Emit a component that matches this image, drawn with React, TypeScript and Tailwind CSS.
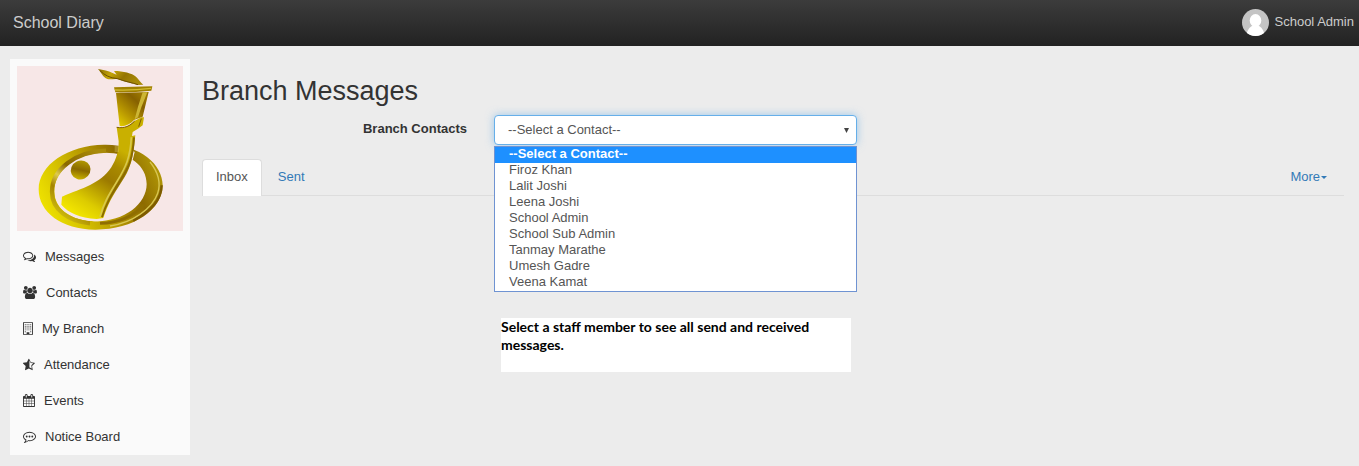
import React from "react";

type IconProps = { path: string; viewBox: string; size: string };

function Glyph({ path, viewBox, size }: IconProps) {
  return (
    <svg viewBox={viewBox} className={size + " mb-0.5 shrink-0 fill-current"} aria-hidden="true">
      <path fillRule="evenodd" d={path} />
    </svg>
  );
}

const messages =
  "M704 384q-153 0-286 52t-211.5 141-78.5 191q0 82 53 158t149 132l97 56-35 84q34-20 62-39l44-31 53 10q78 14 153 14 153 0 286-52t211.5-141 78.5-191-78.5-191-211.5-141-286-52zm0-128q191 0 353.5 68.5t256.5 186.5 94 257-94 257-256.5 186.5-353.5 68.5q-86 0-176-16-124 88-278 128-36 9-86 16h-3q-11 0-20.5-8t-11.5-21q-1-3-1-6.5t.5-6.5 2-6l2.5-5 3.5-5.5 4-5 4.5-5 4-4.5q5-6 23-25t26-29.5 22.5-29 25-38.5 20.5-44q-124-72-195-177t-71-224q0-139 94-257t256.5-186.5 353.5-68.5zm822 1169q10 24 20.5 44t25 38.5 22.5 29 26 29.5 23 25q1 1 4 4.5t4.5 5 4 5 3.5 5.5l2.5 5 2 6 .5 6.5-1 6.5q-3 14-13 22t-22 7q-50-7-86-16-154-40-278-128-90 16-176 16-271 0-472-132 58 4 88 4 161 0 309-45t264-129q125-92 192-212t67-254q0-77-23-152 129 71 204 178t75 230q0 120-71 224.5t-195 176.5z";
const contacts =
  "M657 896q-162 5-265 128h-134q-82 0-138-40.5t-56-118.5q0-353 124-353 6 0 43.5 21t97.5 42.5 119 21.5q67 0 133-23-5 37-5 66 0 139 81 256zm1071 637q0 120-73 189.5t-194 69.5h-874q-121 0-194-69.500t-73-189.500q0-53 3.500-103.500t14-109 26.500-108.500 43-97.500 62-81 85.500-53.500 111.500-20q10 0 43 21.500t73 48 107 48 135 21.500 135-21.500 107-48 73-48 43-21.500q61 0 111.500 20t85.500 53.500 62 81 43 97.500 26.500 108.500 14 109 3.500 103.500zm-1024-1277q0 106-75 181t-181 75-181-75-75-181 75-181 181-75 181 75 75 181zm704 384q0 159-112.500 271.500t-271.500 112.500-271.500-112.500-112.500-271.500 112.500-271.500 271.500-112.500 271.500 112.500 112.500 271.500zm576 225q0 78-56 118.500t-138 40.500h-134q-103-123-265-128 81-117 81-256 0-29-5-66 66 23 133 23 59 0 119-21.500t97.500-42.500 43.500-21q124 0 124 353zm-128-609q0 106-75 181t-181 75-181-75-75-181 75-181 181-75 181 75 75 181z";
const cells = [256, 512, 768, 1024]
  .flatMap((y) => [256, 512, 768, 1024].map((x) => `M${x} ${y}h128v128h-128z`))
  .join("");
const branch =
  "M64 0h1280q64 0 64 64v1664q0 64-64 64H64q-64 0-64-64V64Q0 0 64 0zM128 128v1536h384v-224q0-32 32-32h320q32 0 32 32v224h384V128z" +
  cells +
  "M256 1280h128v128h-128zM1024 1280h128v128h-128z";
const attendance =
  "M1250 957l238-231-329-48-40-6-18-37-147-297v942l35 18 293 155-56-328-7-40zm433-199l-363 354 86 500q5 33-6 51.500t-34 18.500q-17 0-40-12l-449-236-449 236q-23 12-40 12-23 0-34-18.500t-6-51.500l86-500-364-354q-32-32-23-59.500t54-34.500l502-73 225-455q20-41 49-41 28 0 49 41l225 455 502 73q45 7 54 34.500t-24 59.500z";
const events =
  "M192 1664h288v-288h-288v288zm352 0h320v-288h-320v288zm-352-352h288v-320h-288v320zm352 0h320v-320h-320v320zm-352-384h288v-288h-288v288zm736 736h320v-288h-320v288zm-384-736h320v-288h-320v288zm768 736h288v-288h-288v288zm-384-352h320v-320h-320v320zm-352-864v-288q0-13-9.500-22.500t-22.500-9.500h-64q-13 0-22.500 9.500t-9.500 22.500v288q0 13 9.500 22.500t22.500 9.500h64q13 0 22.500-9.500t9.500-22.500zm736 864h288v-320h-288v320zm-384-384h320v-288h-320v288zm384 0h288v-288h-288v288zm32-480v-288q0-13-9.500-22.500t-22.500-9.500h-64q-13 0-22.500 9.500t-9.500 22.500v288q0 13 9.500 22.500t22.500 9.500h64q13 0 22.500-9.500t9.500-22.500zm384-64v1280q0 52-38 90t-90 38h-1408q-52 0-90-38t-38-90v-1280q0-52 38-90t90-38h128v-96q0-66 47-113t113-47h64q66 0 113 47t47 113v96h384v-96q0-66 47-113t113-47h64q66 0 113 47t47 113v96h128q52 0 90 38t38 90z";
const dot = "q0 53-37.5 90.5t-90.5 37.5-90.5-37.5-37.5-90.5 37.5-90.5 90.5-37.5 90.5 37.5 37.5 90.5z";
const notice =
  "M640 896" + dot + "M1024 896" + dot + "M1408 896" + dot +
  "M896 384q-204 0-381.5 69.5t-282 187.5-104.500 255q0 112 71.500 213.500t201.500 175.500l87 50-27 96q-24 91-70 172 152-63 275-171l43-38 57 6q69 8 130 8 204 0 381.500-69.500t282-187.500 104.500-255-104.500-255-282-187.500-381.500-69.500zm896 512q0 174-120 321.500t-326 233-450 85.500q-70 0-145-8-198 175-460 242-49 14-114 22h-5q-15 0-27-10.500t-16-27.500v-1q-3-4-.5-12t2-10 4.500-9.500l6-9 7-8.500 8-9q7-8 31-34.500t34.500-38 31-39.500 32.500-51 27-59 26-76q-157-89-247.500-220t-90.500-281q0-130 71-248.500t191-204.500 286-136.500 348-50.500 348 50.500 286 136.500 191 204.500 71 248.500z";

const menu = [
  { label: "Messages", path: messages, viewBox: "0 0 1792 1792", size: "h-[13px] w-[13px]" },
  { label: "Contacts", path: contacts, viewBox: "64 0 1920 1792", size: "h-[13px] w-[14px]" },
  { label: "My Branch", path: branch, viewBox: "0 0 1408 1792", size: "h-[13px] w-[10px]" },
  { label: "Attendance", path: attendance, viewBox: "64 0 1664 1792", size: "h-[13px] w-[12px]" },
  { label: "Events", path: events, viewBox: "64 0 1664 1792", size: "h-[13px] w-[12px]" },
  { label: "Notice Board", path: notice, viewBox: "0 0 1792 1792", size: "h-[13px] w-[13px]" },
];

const people = [
  "Firoz Khan",
  "Lalit Joshi",
  "Leena Joshi",
  "School Admin",
  "School Sub Admin",
  "Tanmay Marathe",
  "Umesh Gadre",
  "Veena Kamat",
];
const placeholder = "--Select a Contact--";

function Emblem() {
  return (
    <svg viewBox="51 48 498 495" className="block w-full" role="img" aria-label="School emblem">
      <defs>
        <linearGradient id="ring" gradientUnits="userSpaceOnUse" x1="130" y1="490" x2="470" y2="330">
          <stop offset="0" stopColor="#f0e400" />
          <stop offset="0.25" stopColor="#d6c200" />
          <stop offset="0.5" stopColor="#b59700" />
          <stop offset="0.75" stopColor="#8d6a00" />
          <stop offset="1" stopColor="#b39a06" />
        </linearGradient>
        <linearGradient id="inner" x1="0.2" y1="1" x2="0.8" y2="0">
          <stop offset="0" stopColor="#d8c810" />
          <stop offset="0.3" stopColor="#a58400" />
          <stop offset="0.45" stopColor="#decb4c" />
          <stop offset="0.62" stopColor="#8a6800" />
          <stop offset="1" stopColor="#a88a0a" />
        </linearGradient>
        <linearGradient id="body" gradientUnits="userSpaceOnUse" x1="215" y1="500" x2="350" y2="290">
          <stop offset="0" stopColor="#f8ec00" />
          <stop offset="0.25" stopColor="#dccb00" />
          <stop offset="0.6" stopColor="#9c7a00" />
          <stop offset="0.8" stopColor="#a98a00" />
          <stop offset="1" stopColor="#c9b000" />
        </linearGradient>
        <linearGradient id="cup" x1="0" y1="1" x2="0.8" y2="0.1">
          <stop offset="0" stopColor="#ead600" />
          <stop offset="0.4" stopColor="#b89700" />
          <stop offset="0.8" stopColor="#866100" />
          <stop offset="1" stopColor="#9a7600" />
        </linearGradient>
        <linearGradient id="flame" x1="0" y1="0" x2="1" y2="0.3">
          <stop offset="0" stopColor="#8a6d00" />
          <stop offset="0.35" stopColor="#c2a408" />
          <stop offset="0.65" stopColor="#957400" />
          <stop offset="1" stopColor="#a88a08" />
        </linearGradient>
        <linearGradient id="head" x1="0.1" y1="1" x2="0.9" y2="0">
          <stop offset="0" stopColor="#dcc800" />
          <stop offset="0.5" stopColor="#8a6900" />
          <stop offset="1" stopColor="#bba400" />
        </linearGradient>
      </defs>
      <rect x="51" y="48" width="498" height="495" fill="#f7e7e7" />
      <path
        fill="url(#ring)"
        fillRule="evenodd"
        d="M312 284C420 282 488 342 488 406C488 478 402 539 286 539C184 539 116 486 116 418C116 344 204 286 312 284ZM312 308C228 310 163 360 163 424C163 478 216 514 286 514C374 514 440 462 440 402C440 346 388 307 312 308Z"
      />
      <path
        fill="none"
        stroke="url(#inner)"
        strokeWidth="13"
        d="M318 302C228 304 156 358 156 425C156 480 206 514 270 520"
      />
      <path fill="none" stroke="#8f6e00" strokeWidth="9" d="M300 520C352 518 400 500 432 464" />
      <path fill="none" stroke="#d8c652" strokeWidth="4" d="M330 528C400 518 458 474 473 430C484 396 474 366 450 336" />
      <path fill="none" stroke="#7c5b00" strokeWidth="7" d="M400 512C458 482 484 444 485 406" />
      <path fill="#f7e7e7" d="M396 300L404 306C394 350 384 376 362 410C338 446 324 476 316 506L304 512C312 472 330 442 354 404C376 368 386 350 396 300Z" />
      <path fill="#f7e7e7" d="M180 438L186 440L186 464C206 492 240 507 296 508L296 514L282 514C236 510 196 492 180 466Z" />
      <path
        fill="url(#body)"
        d="M350 232C372 236 388 230 402 214L424 202L432 202L428 226L414 236L398 246L396 258L406 256L402 290C396 336 388 360 366 394C336 440 324 462 310 504L290 507C240 504 204 488 184 464L186 440C248 414 300 402 334 352C350 326 356 304 356 274Z"
      />
      <path fill="none" stroke="#d9c84c" strokeWidth="5" d="M394 262C391 322 378 350 350 396C324 438 310 462 300 500" />
      <path fill="none" stroke="#8a6a00" strokeWidth="6" d="M402 262C398 326 387 352 360 394C332 438 317 464 306 502" />
      <path fill="none" stroke="#e2d26a" strokeWidth="2" d="M344 291L357 291M344 297L357 297M344 303L357 303" />
      <path fill="none" stroke="#7d5c00" strokeWidth="3" d="M350 232C374 236 390 228 404 213M424 206L416 230" />
      <ellipse cx="242" cy="360" rx="30" ry="28" fill="url(#head)" transform="rotate(-25 242 360)" />
      <path fill="url(#cup)" d="M348 129L446 126L428 200L402 210C390 224 374 230 359 228Z" />
      <path fill="#cdb634" d="M428 127L442 127L424 172L414 202L404 208L414 170Z" />
      <path fill="#a08100" d="M342 112L457 109L454 122Q400 128 346 127Z" />
      <path fill="#d2bd30" d="M343 118Q398 120 454 113L453 117Q400 124 346 122Z" />
      <path
        fill="url(#flame)"
        d="M294 57C310 61 326 62 336 68L350 74L342 63C370 63 396 70 408 80C416 88 422 97 430 104L412 105C398 100 376 97 356 88C342 84 326 92 316 84C306 76 302 66 294 57Z"
      />
      <path fill="none" stroke="#6d5000" strokeWidth="3" d="M300 62C314 76 330 84 352 86C374 94 396 98 414 104" />
    </svg>
  );
}

export default function App() {
  return (
    <div className="min-h-screen bg-[#ececec] font-['Liberation_Sans',Arial,sans-serif] text-[13px] leading-[18px] text-[#333333]">
      <header className="flex h-[46px] items-center justify-between bg-linear-to-b from-[#3c3c3c] to-[#222222] pr-[5px] pb-0.5 pl-[13px] text-[#cccccc]">
        <a href="#home" className="pt-0.5 text-base">School Diary</a>
        <a href="#account" className="flex items-center gap-1.5">
          <svg viewBox="0 0 27 27" className="size-[27px]" aria-hidden="true">
            <defs>
              <clipPath id="avatar"><circle cx="13.5" cy="13.5" r="13.5" /></clipPath>
            </defs>
            <g clipPath="url(#avatar)">
              <rect width="27" height="27" fill="#c4c4c4" />
              <ellipse cx="13.5" cy="11.5" rx="5.8" ry="6.5" fill="#fff" />
              <path fill="#fff" d="M4.500 27C5 20 8 18.500 10.500 16.500H16.500C19 18.500 22 20 22.500 27Z" />
            </g>
          </svg>
          <span>School Admin</span>
        </a>
      </header>

      <div className="flex items-start gap-3 pt-[13px] pr-[15px] pb-[11px] pl-2.5">
        <aside className="w-[180px] shrink-0 bg-[#fafafa] px-[7px] pt-[7px]">
          <Emblem />
          <nav className="pt-2">
            <ul>
              {menu.map(({ label, ...icon }) => (
                <li key={label}>
                  <a href="#section" className="flex h-9 items-center gap-[9px] pl-1.5">
                    <Glyph {...icon} />
                    {label}
                  </a>
                </li>
              ))}
            </ul>
          </nav>
        </aside>

        <main className="min-w-0 grow pt-[17px]">
          <h1 className="text-[27px] leading-[30px]">Branch Messages</h1>

          <div className="-mx-[15px] mt-[9px] flex">
            <label htmlFor="contact" className="w-1/4 pt-[5px] pr-[13px] text-right font-bold">
              Branch Contacts
            </label>
            <div className="w-1/3 px-3.5">
              <div className="relative">
                <select
                  id="contact"
                  className="block h-[30px] w-full appearance-none rounded-[4px] border border-[#66afe9] bg-white px-[13px] text-[#555555] shadow-[0_0_8px_rgba(102,175,233,0.6)] outline-none"
                >
                  <option>{placeholder}</option>
                  {people.map((name) => (
                    <option key={name}>{name}</option>
                  ))}
                </select>
                <svg viewBox="0 0 5 5" className="pointer-events-none absolute top-[13px] right-2 size-[5px] fill-[#444444]" aria-hidden="true">
                  <path d="M0 0h5L2.500 5z" />
                </svg>
                <ul
                  role="listbox"
                  aria-label="Branch Contacts"
                  className="absolute inset-x-0 top-[31px] z-10 border border-[#6f93d2] bg-white leading-[14px] text-[#555555]"
                >
                  <li role="option" aria-selected="true" className="h-4 bg-[#1e90ff] px-3.5 font-bold text-white">
                    {placeholder}
                  </li>
                  {people.map((name) => (
                    <li key={name} role="option" aria-selected="false" className="h-4 px-3.5">
                      {name}
                    </li>
                  ))}
                </ul>
              </div>
            </div>
          </div>

          <nav className="mt-3.5 flex border-b border-[#dddddd]">
            <a
              href="#inbox"
              className="-mb-px rounded-t-[4px] border border-b-0 border-[#dddddd] bg-white px-[13px] pt-2 pb-2.5 text-[#555555]"
            >
              Inbox
            </a>
            <a href="#sent" className="px-4 pt-[9px] pb-2 text-[#337ab7]">Sent</a>
            <button type="button" className="ml-auto flex items-center gap-px px-[17px] text-[#337ab7]">
              More
              <svg viewBox="0 0 6 3" className="h-[3px] w-1.5 fill-current" aria-hidden="true">
                <path d="M0 0h6L3 3z" />
              </svg>
            </button>
          </nav>

          <div className="-mx-[15px] mt-[122px] flex">
            <p className="ml-[calc(25%+21px)] h-[54px] w-[350px] bg-white font-['Lato',sans-serif] text-sm leading-[18px] font-bold text-black">
              Select a staff member to see all send and received messages.
            </p>
          </div>
        </main>
      </div>
    </div>
  );
}
